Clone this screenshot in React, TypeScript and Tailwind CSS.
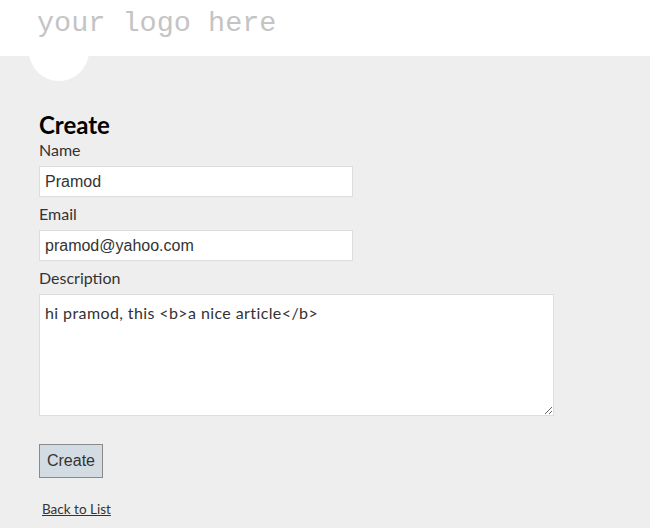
import React from "react";

export default function App() {
  const seg = { fontFamily: "Lato, 'Open Sans', sans-serif" };
  return (
    <div className="relative w-[650px] h-[528px] overflow-hidden bg-[#eeeeee]" style={seg}>
      <div className="absolute left-[29px] top-[21px] w-[60px] h-[60px] rounded-full bg-white" />
      <header className="relative h-[56px] bg-white pl-[37px]">
        <div
          className="pt-[2px] text-[28.5px] leading-[44px] text-[#c4c4c4]"
          style={{ fontFamily: "'Liberation Mono', 'DejaVu Sans Mono', monospace" }}
        >
          your logo here
        </div>
      </header>
      <main className="relative pl-[39px]">
        <h2 className="mt-[55px] text-[24px] leading-[28px] font-bold text-black">Create</h2>
        <form className="flex flex-col">
          <label className="mt-[1px] text-[16px] leading-[20px] text-[#333]">Name</label>
          <input
            className="mt-[6px] w-[314px] h-[31px] bg-white border border-[#dddddd] px-[5px] text-[16px] text-[#333] outline-none"
            style={{ fontFamily: "'Liberation Sans', Arial, sans-serif" }}
            defaultValue="Pramod"
          />
          <label className="mt-[7px] text-[16px] leading-[20px] text-[#333]">Email</label>
          <input
            className="mt-[6px] w-[314px] h-[31px] bg-white border border-[#dddddd] px-[5px] text-[16px] text-[#333] outline-none"
            style={{ fontFamily: "'Liberation Sans', Arial, sans-serif" }}
            defaultValue="pramod@yahoo.com"
          />
          <label className="mt-[7px] text-[16px] leading-[20px] text-[#333]">Description</label>
          <textarea
            className="mt-[6px] w-[515px] h-[122px] bg-white border border-[#dddddd] px-[5px] py-[8px] text-[16px] leading-[20px] tracking-[0.4px] text-[#333] outline-none resize"
            style={seg}
            spellCheck={false}
            defaultValue={"hi pramod, this <b>a nice article</b>"}
          />
          <div className="mt-[28px]">
            <button
              type="button"
              className="w-[64px] h-[34px] bg-[#d3dce3] border border-[#8a8a8a] text-[16px] text-[#333]"
              style={{ fontFamily: "'Liberation Sans', Arial, sans-serif" }}
            >
              Create
            </button>
          </div>
        </form>
        <div className="mt-[18px] pl-[3px]">
          <a href="#" className="text-[13.5px] leading-[16px] text-[#333] underline">Back to List</a>
        </div>
      </main>
    </div>
  );
}
